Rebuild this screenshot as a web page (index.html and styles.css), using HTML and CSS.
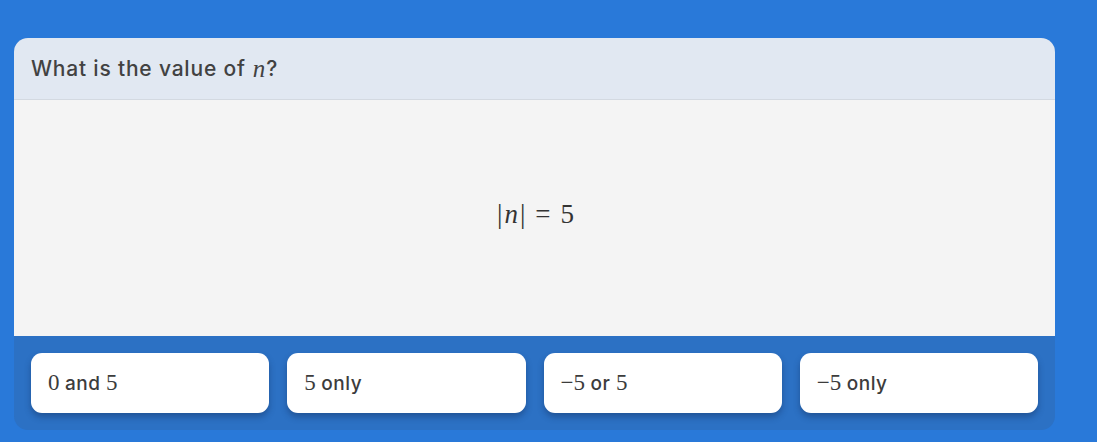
FILE: index.html
```html
<!DOCTYPE html>
<html>
<head>
<meta charset="utf-8">
<link rel="stylesheet" href="styles.css">
</head>
<body>
<div class="card">
  <div class="header">What is the value of <span class="mi">n</span>?</div>
  <div class="content">
    <div class="eq"><span class="mo">|</span><span class="mi">n</span><span class="mo">|</span><span class="rel">=</span><span class="mn">5</span></div>
  </div>
  <div class="answers">
    <div class="answer"><span class="mn">0</span> and <span class="mn">5</span></div>
    <div class="answer"><span class="mn">5</span> only</div>
    <div class="answer"><span class="mn">−5</span> or <span class="mn">5</span></div>
    <div class="answer"><span class="mn">−5</span> only</div>
  </div>
</div>
</body>
</html>
```

FILE: styles.css
```css
html, body {
  margin: 0;
  padding: 0;
  background: #2979d9;
}
body {
  padding: 38px 42px 0 14px;
  font-family: "Inter", "Open Sans", sans-serif;
  color: #3d3d3d;
}
.card {
  width: 1041px;
  border-radius: 14px;
  overflow: hidden;
  background: #2c71c4;
}
.header {
  height: 62px;
  box-sizing: border-box;
  padding: 0 17px;
  display: flex;
  align-items: center;
  background: #e1e8f2;
  border-bottom: 1px solid #d3d9e1;
  font-size: 21px;
  letter-spacing: 0.8px;
  font-weight: 500;
  color: #424242;
}
.header .mi {
  margin-left: 7px;
  margin-right: 1px;
  font-size: 25px;
  letter-spacing: 0;
}
.mi {
  font-family: "Liberation Serif", serif;
  font-style: italic;
  font-weight: 400;
}
.mn, .mo, .rel {
  font-family: "Liberation Serif", serif;
  font-weight: 400;
  letter-spacing: 0;
}
.content {
  height: 236px;
  background: #f4f4f4;
  display: flex;
  align-items: center;
  justify-content: center;
}
.eq {
  font-size: 27px;
  color: #333;
  margin-top: -10px;
  margin-left: 2px;
}
.eq .mi { padding: 0 2px 0 2px; }
.eq .rel { margin: 0 10px; }
.answers {
  display: flex;
  gap: 18px;
  padding: 17px;
}
.answer {
  flex: 1;
  height: 60px;
  box-sizing: border-box;
  background: #fff;
  border-radius: 11px;
  box-shadow: 0 4px 6px rgba(20, 50, 100, 0.45);
  display: flex;
  align-items: center;
  padding: 0 17px;
  font-size: 19px;
  letter-spacing: 0.5px;
  font-weight: 500;
  color: #3c3c3c;
  white-space: pre;
}
.answer .mn { font-size: 23px; letter-spacing: 0; }
```
